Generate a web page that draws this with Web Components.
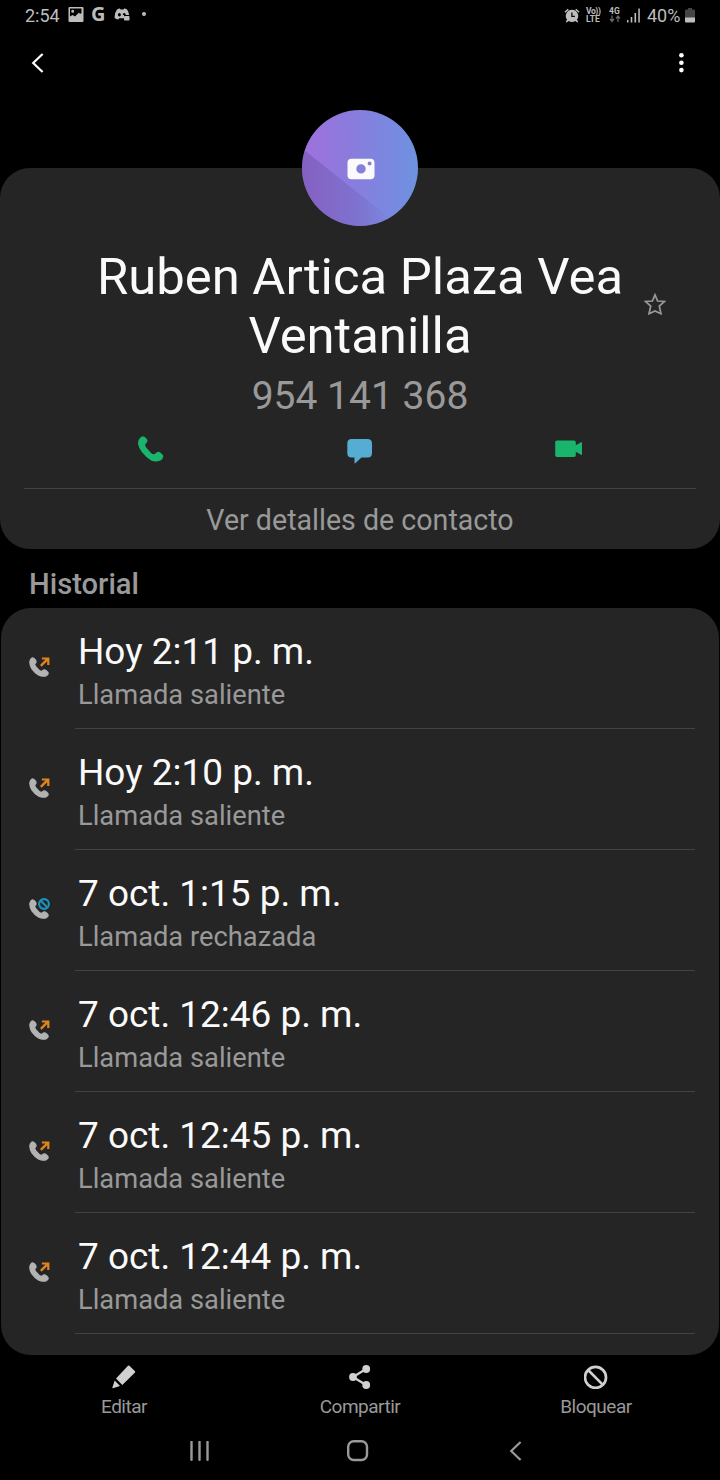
<!DOCTYPE html>
<html lang="es">
<head>
<meta charset="utf-8">
<meta name="viewport" content="width=device-width, initial-scale=1">
<title>Contacto</title>
<style>
  body {
    margin: 0;
    background: #000;
    font-family: Roboto, "Liberation Sans", sans-serif;
  }
</style>
</head>
<body>
<contact-screen></contact-screen>

<script>
// name: [width, height, shapes]
const ICONS = {
  image: [16, 16, `<path fill-rule="evenodd" d="M1.5 0h13q1 0 1 1v13q0 1-1 1h-13q-1 0-1-1v-13q0-1 1-1zM2 1.5v8l2.5-1.5 2.5 1.5L11 5.5l1 1.5 1.5-1V1.5zM4.7 2.8a1.5 1.5 0 1 1 0 3 1.5 1.5 0 0 1 0-3z"/>`],
  discord: [16, 14, `<path fill-rule="evenodd" d="M3 1.5Q5 .4 6 .6l.5.8h3l.6-.8q1.4-.1 3 .9 1.6 2.4 2 5.5H10v3.2H5.3l-1.2 1.3q-2-.3-3.6-1.7Q.3 5 3 1.5zM5.4 5a1.5 1.7 0 1 0 0 3.4 1.5 1.7 0 0 0 0-3.4zm5 0q-1.7 0-1.7 2h3q0-2-1.3-2z"/><rect x="10" y="8" width="5.5" height="4.5" rx=".8"/>`],
  alarm: [16, 15, `<path fill-rule="evenodd" d="M8 1.7a6.2 6.2 0 0 1 4.9 10l1.4 1.8-1.1.9-1.8-1.5a6.2 6.2 0 0 1-6.8 0L2.8 14.4l-1.1-.9L3.1 11.7A6.2 6.2 0 0 1 8 1.7zM7.3 4.5v4.6h3.5V7.8H8.5V4.5z"/><path d="M1 4.2 4.2 1.2M15 4.2 11.8 1.2" fill="none" stroke="currentColor" stroke-width="1.5"/>`],
  arrows: [12, 8, `<path d="M3 .5V6M1 4l2 2.5L5 4M9 7V1.5M7 3.5 9 1l2 2.5" fill="none" stroke="#666" stroke-width="1.3"/>`],
  signal: [14, 15, `<path d="M0 12h1.5v2.5H0zM3.7 9h1.6v5.5H3.7zM7.5 5h1.6v9.5H7.5zM11.3 .5h1.5v14h-1.5z"/>`],
  battery: [10, 15, `<path fill="#444" d="M3 0h4v1.5h2q1 0 1 1V10H0V2.5q0-1 1-1h2z"/><path d="M0 9.5h10V13.5q0 1-1 1H1q-1 0-1-1z"/>`],
  back: [14, 20, `<path d="M11.6 1 2.2 10l9.4 9" fill="none" stroke="currentColor" stroke-width="2.2"/>`],
  more: [6, 20, `<circle cx="3.4" cy="2.3" r="2.3"/><circle cx="3.4" cy="9.7" r="2.3"/><circle cx="3.4" cy="17.1" r="2.3"/>`],
  camera: [28, 22, `<path fill-rule="evenodd" d="M4.5.7h19q4 0 4 4v12.500q0 4-4 4h-19q-4 0-4-4V4.700q0-4 4-4zM14 6.200a4.700 4.700 0 1 0 0 9.400 4.700 4.700 0 0 0 0-9.400zM22.600 3.600a2 2 0 1 0 0 4 2 2 0 0 0 0-4z"/>`],
  star: [22, 22, `<path d="M11 1.8 13.6 8l6.9.5-5.2 4.6 1.7 7.6L11 18l-6 2.700 1.700-7.600L1.500 8.500 8.400 8z" fill="none" stroke="currentColor" stroke-width="1.7"/>`],
  phone: [26, 26, `<path d="M.9 3.5Q2.6.8 4.8.3 7 .4 8.8 3.1 9.8 4.8 9.2 6L7.300 8.200Q6.800 9.500 8 11.300L12.800 16.800Q14.800 18.600 16.400 18.300L19 16.200Q20.500 15.300 22.300 16.400 25.200 18.500 25.300 20.500 25.200 22.500 22.500 24.600 18 26.300 13.500 24.700 8 21.500 4 16.300.8 12 .1 8.200-.1 5.500.9 3.500z"/>`],
  message: [26, 25, `<path d="M4.5 0h16q4.5 0 4.5 4.5V14q0 4.5-4.5 4.5H14.500L8.300 24.300q-.8.500-.8-.5V18.500h-3Q.3 18.500.3 14V4.500Q.3 0 4.500 0z"/>`],
  video: [28, 18, `<path d="M2 .5h17q1.8 0 1.8 1.8v3l5.2-3q1-.5 1 .5v11.500q0 1-1 .5l-5.200-3v3.500q0 1.800-1.800 1.800H2q-1.800 0-1.800-1.800V2.300Q.2.500 2 .5z"/>`],
  handset: [22, 22, `<path d="M1.3 4.2Q2.3 2.3 3.6 2 5 2.2 6.5 4.1 7.3 5.500 6.900 6.400L5.600 8Q5.500 9.200 6.900 11L10 14.200Q11.900 15.600 13 15.200L14.500 14Q15.900 13.600 17.500 14.900 19.200 16.400 19.200 17.500 19 18.600 17.100 19.800 13.500 20.900 9.500 19 5.800 17 3 13 1 9.700.9 6.800.8 5.300 1.300 4.200z" stroke="currentColor" stroke-width="1.3"/>`],
  outgoing: [10, 10, `<path d="M.8 8.9 7 2.7" stroke="currentColor" stroke-width="2.4"/><path d="M1.900 .4h7.500v7.500H7.200V4.200L5.500 2.600H1.900z"/>`],
  rejected: [12, 12, `<circle cx="6" cy="6" r="4.9" fill="none" stroke="currentColor" stroke-width="2.1"/><path d="M2.7 2.7 9.3 9.3" stroke="currentColor" stroke-width="2"/>`],
  pencil: [24, 24, `<path d="M16 .8q.7-.6 1.4 0L23 6.2q.5.7 0 1.3L10.300 20 4 13.500zM2.700 15.500 8 20.900.8 23.200q-.6 0-.4-.7z"/>`],
  share: [22, 24, `<circle cx="4" cy="12" r="3.9"/><circle cx="17.2" cy="4" r="3.9"/><circle cx="17.2" cy="20" r="3.9"/><path d="M17 4 4 12l13 8" fill="none" stroke="currentColor" stroke-width="2.2"/>`],
  block: [24, 24, `<circle cx="11.5" cy="12.4" r="10.5" fill="none" stroke="currentColor" stroke-width="2.7"/><path d="M4.1 5 18.900 19.800" stroke="currentColor" stroke-width="2.6"/>`],
  recents: [20, 20, `<path d="M1.5 .7v18M9.5 .7v18M17.5 .7v18" stroke="currentColor" stroke-width="2.4" stroke-linecap="round"/>`],
  home: [22, 22, `<rect x="1.2" y="1.2" width="18.8" height="18.8" rx="5.5" fill="none" stroke="currentColor" stroke-width="2.4"/>`],
};

class UiIcon extends HTMLElement {
  connectedCallback() {
    const [w, h, shapes] = ICONS[this.getAttribute("name")];
    this.attachShadow({ mode: "open" }).innerHTML = `
    <style>
      :host { display: block; flex: none; width: ${w}px; height: ${h}px; }
      svg { display: block; }
    </style>
    <svg width="${w}" height="${h}" viewBox="0 0 ${w} ${h}" fill="currentColor">${shapes}</svg>`;
  }
}

class StatusBar extends HTMLElement {
  connectedCallback() {
    this.attachShadow({ mode: "open" }).innerHTML = `
    <style>
      :host {
        display: flex;
        justify-content: space-between;
        height: 30px;
        padding: 0 25px;
        box-sizing: border-box;
        color: #bdbdbd;
        font-size: 18px;
        line-height: 31px;
      }
      .side { display: flex; align-items: center; }
      .time { width: 43px; }
      .picture { margin-right: 7px; }
      .google {
        font-family: "Open Sans", sans-serif;
        font-size: 20px;
        font-weight: 700;
        line-height: 28px;
        margin-top: -2px;
        width: 23px;
      }
      .dot { width: 4px; height: 4px; border-radius: 50%; background: currentColor; margin: -2px 0 0 12px; }
      .stack { font-size: 8.5px; line-height: 8px; font-weight: 700; }
      .stack span { display: block; }
      .volte { width: 23px; margin-left: 6px; white-space: nowrap; }
      .volte span:first-child { letter-spacing: -.4px; }
      .net { width: 18px; }
      .percent { margin: 0 5px 0 6px; width: 33px; }
    </style>
    <div class="side">
      <span class="time">2:54</span>
      <ui-icon class="picture" name="image"></ui-icon>
      <span class="google">G</span>
      <ui-icon name="discord"></ui-icon>
      <span class="dot"></span>
    </div>
    <div class="side">
      <ui-icon name="alarm"></ui-icon>
      <div class="stack volte"><span>Vo))</span><span>LTE</span></div>
      <div class="stack net"><span>4G</span><ui-icon name="arrows"></ui-icon></div>
      <ui-icon name="signal"></ui-icon>
      <span class="percent">40%</span>
      <ui-icon name="battery"></ui-icon>
    </div>`;
  }
}

class AppBar extends HTMLElement {
  connectedCallback() {
    this.attachShadow({ mode: "open" }).innerHTML = `
    <style>
      :host {
        display: flex;
        justify-content: space-between;
        align-items: center;
        height: 65px;
        padding: 0 36px 0 31px;
        color: #fff;
      }
    </style>
    <ui-icon name="back"></ui-icon>
    <ui-icon name="more"></ui-icon>`;
  }
}

class ContactCard extends HTMLElement {
  connectedCallback() {
    this.attachShadow({ mode: "open" }).innerHTML = `
    <style>
      :host {
        display: block;
        height: 381px;
        margin-top: 73px;
        border-radius: 30px;
        background: #252525;
      }
      .card {
        display: flex;
        flex-direction: column;
        align-items: center;
      }
      .avatar {
        display: grid;
        width: 116px;
        height: 116px;
        margin-top: -58px;
        border-radius: 50%;
        overflow: hidden;
        color: #fafafa;
        background: linear-gradient(90deg, #a070dd, #8b7bdd 40%, #7090e0 95%);
      }
      .avatar > * { grid-area: 1 / 1; }
      .avatar ui-icon { place-self: center; margin: 1px 0 0 1px; }
      .shade {
        clip-path: polygon(0 33%, 84% 100%, 0 100%);
        background: linear-gradient(90deg, #5a4a9a66, #5a4a9a33 50%, #5a4a9a00 78%);
      }
      .heading {
        display: grid;
        grid-template-columns: 65px 1fr 65px;
        align-items: center;
        width: 100%;
        margin-top: 21px;
      }
      h1 {
        grid-column: 2;
        margin: 0;
        font-size: 50.8px;
        font-weight: 400;
        line-height: 59px;
        text-align: center;
        white-space: nowrap;
        color: #fafafa;
      }
      .star { color: #999; margin: -4px 0 0 -11px; }
      .number {
        font-size: 39px;
        line-height: 46px;
        margin-top: 8px;
        color: #999;
      }
      .actions {
        display: grid;
        grid-template-columns: repeat(3, 209px);
        justify-content: center;
        justify-items: center;
        align-items: center;
        height: 60px;
      }
      .phone, .video { color: #1ab56c; }
      .message { color: #55add3; margin-top: 4px; }
      .details {
        width: 672px;
        margin-top: 9px;
        border-top: 1px solid #424242;
        color: #999;
        font-size: 28.6px;
        line-height: 62px;
        text-align: center;
      }
    </style>
    <div class="card">
      <div class="avatar">
        <div class="shade"></div>
        <ui-icon name="camera"></ui-icon>
      </div>
      <div class="heading">
        <h1><slot name="name"></slot></h1>
        <ui-icon class="star" name="star"></ui-icon>
      </div>
      <div class="number"><slot name="number"></slot></div>
      <div class="actions">
        <ui-icon class="phone" name="phone"></ui-icon>
        <ui-icon class="message" name="message"></ui-icon>
        <ui-icon class="video" name="video"></ui-icon>
      </div>
      <div class="details"><slot name="details"></slot></div>
    </div>`;
  }
}

class CallRow extends HTMLElement {
  connectedCallback() {
    const type = this.getAttribute("type");
    this.attachShadow({ mode: "open" }).innerHTML = `
    <style>
      :host {
        display: flex;
        height: 121px;
        padding: 0 24px 0 28px;
      }
      .icon {
        position: relative;
        width: 46px;
        padding-top: 48px;
        color: #b3b3b3;
      }
      .badge { position: absolute; }
      .outgoing { left: 11px; top: 49px; color: #e08420; }
      .rejected { left: 9px; top: 48px; color: #1d94bd; }
      .text {
        flex: 1;
        box-sizing: border-box;
        padding: 22px 0 0 3px;
        border-bottom: 1px solid #424242;
      }
      .when {
        font-size: 36.95px;
        line-height: 44px;
        color: #fafafa;
      }
      .what {
        margin-top: 5px;
        font-size: 27.3px;
        line-height: 32px;
        color: #999;
      }
    </style>
    <div class="icon">
      <ui-icon name="handset"></ui-icon>
      <ui-icon class="badge ${type}" name="${type}"></ui-icon>
    </div>
    <div class="text">
      <div class="when"><slot></slot></div>
      <div class="what">Llamada ${type === "rejected" ? "rechazada" : "saliente"}</div>
    </div>`;
  }
}

class CallHistory extends HTMLElement {
  connectedCallback() {
    this.attachShadow({ mode: "open" }).innerHTML = `
    <style>
      :host { display: block; }
      h2 {
        margin: 0;
        padding: 6px 0 0 29px;
        height: 53px;
        font-size: 29.2px;
        font-weight: 500;
        line-height: 59px;
        color: #999;
      }
      .list {
        height: 747px;
        margin: 0 1px;
        border-radius: 30px;
        background: #252525;
        overflow: hidden;
      }
    </style>
    <h2>Historial</h2>
    <div class="list"><slot></slot></div>`;
  }
}

class ToolBar extends HTMLElement {
  connectedCallback() {
    this.attachShadow({ mode: "open" }).innerHTML = `
    <style>
      :host {
        display: grid;
        grid-template-columns: repeat(3, 236px);
        justify-content: center;
        height: 70px;
      }
      .item {
        display: flex;
        flex-direction: column;
        align-items: center;
        padding-top: 10px;
        color: #d0d0d0;
      }
      .label {
        margin-top: 6px;
        font-size: 19px;
        line-height: 24px;
        letter-spacing: -.5px;
        color: #999;
      }
    </style>
    <div class="item"><ui-icon name="pencil"></ui-icon><span class="label">Editar</span></div>
    <div class="item"><ui-icon name="share"></ui-icon><span class="label">Compartir</span></div>
    <div class="item"><ui-icon name="block"></ui-icon><span class="label">Bloquear</span></div>`;
  }
}

class NavBar extends HTMLElement {
  connectedCallback() {
    this.attachShadow({ mode: "open" }).innerHTML = `
    <style>
      :host {
        display: grid;
        grid-template-columns: repeat(3, 158px);
        justify-content: center;
        justify-items: center;
        align-items: center;
        height: 51px;
        padding-right: 5px;
        color: #999;
      }
    </style>
    <ui-icon name="recents"></ui-icon>
    <ui-icon name="home"></ui-icon>
    <ui-icon name="back"></ui-icon>`;
  }
}

class ContactScreen extends HTMLElement {
  connectedCallback() {
    this.attachShadow({ mode: "open" }).innerHTML = `
    <style>
      :host {
        display: block;
        width: 720px;
        height: 1480px;
        overflow: hidden;
        background: #000;
      }
    </style>
    <status-bar></status-bar>
    <app-bar></app-bar>
    <contact-card>
      <span slot="name">Ruben Artica Plaza Vea<br>Ventanilla</span>
      <span slot="number">954 141 368</span>
      <span slot="details">Ver detalles de contacto</span>
    </contact-card>
    <call-history>
      <call-row type="outgoing">Hoy 2:11 p. m.</call-row>
      <call-row type="outgoing">Hoy 2:10 p. m.</call-row>
      <call-row type="rejected">7 oct. 1:15 p. m.</call-row>
      <call-row type="outgoing">7 oct. 12:46 p. m.</call-row>
      <call-row type="outgoing">7 oct. 12:45 p. m.</call-row>
      <call-row type="outgoing">7 oct. 12:44 p. m.</call-row>
    </call-history>
    <tool-bar></tool-bar>
    <nav-bar></nav-bar>`;
  }
}

customElements.define("ui-icon", UiIcon);
customElements.define("status-bar", StatusBar);
customElements.define("app-bar", AppBar);
customElements.define("contact-card", ContactCard);
customElements.define("call-row", CallRow);
customElements.define("call-history", CallHistory);
customElements.define("tool-bar", ToolBar);
customElements.define("nav-bar", NavBar);
customElements.define("contact-screen", ContactScreen);
</script>
</body>
</html>
